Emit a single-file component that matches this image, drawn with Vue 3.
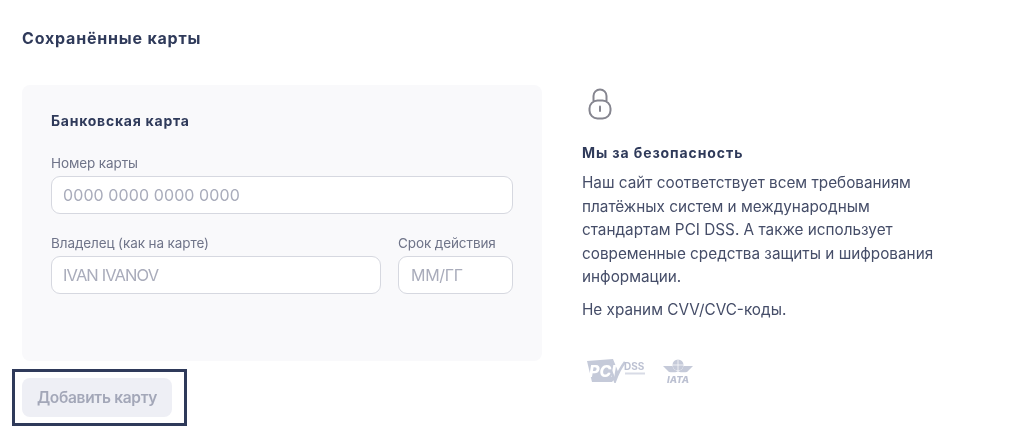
<script setup>
const aboutLines = [
  "Наш сайт соответствует всем требованиям платёжных систем и международным стандартам PCI DSS. А также использует современные средства защиты и шифрования информации.",
  "Не храним CVV/CVC-коды.",
];
</script>

<template>
  <div class="page">
    <h1 class="title">Сохранённые карты</h1>
    <div class="columns">
      <div class="left">
        <form class="card" @submit.prevent>
          <h2 class="card-title">Банковская карта</h2>
          <label class="field">
            <span class="label">Номер карты</span>
            <input class="input number" placeholder="0000 0000 0000 0000" />
          </label>
          <div class="row">
            <label class="field owner">
              <span class="label">Владелец (как на карте)</span>
              <input class="input" placeholder="IVAN IVANOV" />
            </label>
            <label class="field expire">
              <span class="label">Срок действия</span>
              <input class="input" placeholder="ММ/ГГ" />
            </label>
          </div>
        </form>
        <div class="focus-box">
          <button class="add" type="button">Добавить карту</button>
        </div>
      </div>

      <aside class="about">
        <svg class="lock" width="24" height="32" viewBox="0 0 24 32" fill="none" stroke="#85858f" stroke-width="2">
          <path d="M5.5 13V8a6.5 6.5 0 0 1 13 0v5" />
          <rect x="1.5" y="12.5" width="21" height="18" rx="8" />
          <path d="M12 18.5v4.5" stroke-linecap="round" />
        </svg>
        <h3 class="about-title">Мы за безопасность</h3>
        <p v-for="line in aboutLines" :key="line" class="about-text">{{ line }}</p>
        <div class="logos">
          <svg width="60" height="24" viewBox="0 0 60 24">
            <path d="M0 2L26 0 32 15 25 23 5 23Z" fill="#c5cad9" />
            <text x="2" y="18" class="pci">PCI</text>
            <path d="M24 12l4 10c3-8 6-14 10-19" fill="none" stroke="#c5cad9" stroke-width="2.6" />
            <text x="37" y="11" class="dss">DSS</text>
            <rect x="38" y="13.5" width="20" height="2" fill="#d8dbe6" />
          </svg>
          <svg class="iata" width="30" height="24" viewBox="0 0 30 24">
            <circle cx="15" cy="6" r="5.5" fill="#c5cad9" />
            <path d="M15 0.5v11M9.5 6h11" stroke="#fff" stroke-width="0.7" />
            <path d="M0 7h9.5c.5 2.5 2 4 5.5 5.5-3 1-6 1-9 .5zM30 7h-9.5c-.5 2.5-2 4-5.5 5.5 3 1 6 1 9 .5z" fill="#c5cad9" />
            <text x="15" y="23.5" text-anchor="middle" class="iata-text">IATA</text>
          </svg>
        </div>
      </aside>
    </div>
  </div>
</template>

<style scoped>
.page {
  width: 1024px;
  height: 448px;
  padding: 29px 0 0 22px;
  box-sizing: border-box;
  font-family: Inter, "Liberation Sans", sans-serif;
  color: #2f3a5a;
  overflow: hidden;
  filter: blur(0.35px);
}

.title {
  margin: 0;
  font-family: Inter, sans-serif;
  font-size: 16px;
  line-height: 18px;
  font-weight: 700;
  letter-spacing: 0.8px;
}

.columns {
  display: flex;
  margin-top: 38px;
}

.left {
  width: 520px;
}

.card {
  height: 276px;
  box-sizing: border-box;
  padding: 27px 29px;
  background: #f9f9fb;
  border-radius: 8px;
}

.card-title {
  margin: 0 0 25px;
  font-family: Inter, sans-serif;
  font-size: 14px;
  line-height: 18px;
  font-weight: 700;
  letter-spacing: 0.75px;
}

.field {
  display: block;
}

.label {
  display: block;
  margin-bottom: 5px;
  font-size: 13.5px;
  line-height: 16px;
  color: #6f7489;
  letter-spacing: -0.1px;
}

.input {
  display: block;
  width: 100%;
  height: 38px;
  box-sizing: border-box;
  padding: 0 11px;
  background: #fff;
  border: 1px solid #d6d8e0;
  border-radius: 9px;
  font-family: Inter, sans-serif;
  font-size: 16.5px;
  letter-spacing: -0.9px;
}

.number {
  font-size: 16px;
  letter-spacing: 0.1px;
}

.input::placeholder {
  color: #a9acbb;
  opacity: 1;
}

.row {
  display: flex;
  gap: 17px;
  margin-top: 21px;
}

.owner {
  width: 330px;
}

.expire {
  width: 115px;
}

.expire .input {
  padding: 0 12px;
  font-size: 16px;
  letter-spacing: -0.3px;
}

.focus-box {
  width: 175px;
  height: 57px;
  box-sizing: border-box;
  margin: 8px 0 0 -10px;
  padding: 6px 7px;
  border: 3px solid #2f3a5a;
}

.add {
  display: block;
  width: 150px;
  height: 39px;
  padding: 0;
  background: #eeeff5;
  border: 0;
  border-radius: 8px;
  font-family: Inter, sans-serif;
  font-size: 15.5px;
  font-weight: 600;
  letter-spacing: -0.3px;
  color: #a3a7b8;
}

.about {
  width: 355px;
  margin-left: 40px;
}

.lock {
  display: block;
  margin: 3px 0 24px 6px;
}

.about-title {
  margin: 0 0 9px;
  font-family: Inter, sans-serif;
  font-size: 14px;
  line-height: 18px;
  font-weight: 700;
  letter-spacing: 0.9px;
}

.about-text {
  margin: 0 0 9.5px;
  font-size: 15.3px;
  line-height: 23.6px;
  color: #454d68;
}

.logos {
  display: flex;
  align-items: center;
  gap: 16px;
  margin: 37px 0 0 5px;
}

.pci {
  font: italic 800 16px Inter, sans-serif;
  fill: #fff;
}

.dss {
  font: 700 10px Inter, sans-serif;
  fill: #bcc1d2;
}

.iata-text {
  font: italic 800 9.5px Inter, sans-serif;
  fill: #bcc1d2;
}
</style>
